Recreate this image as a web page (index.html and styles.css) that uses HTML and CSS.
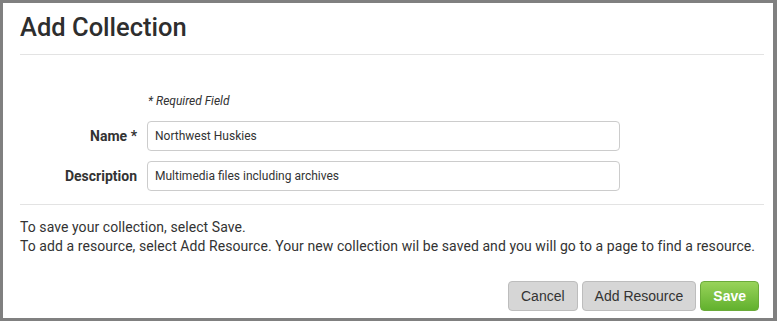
FILE: index.html
```html
<!DOCTYPE html>
<html lang="en">
<head>
    <meta charset="UTF-8">
    <title>Add Collection</title>
    <link rel="stylesheet" href="styles.css">
</head>
<body>
    <div class="dialog">
        <h1 class="title">Add Collection</h1>
        <hr class="rule">
        <form class="coll-form" action="">
            <p class="req-note">* Required Field</p>
            <!-- 名称 -->
            <div class="form-row">
                <label class="form-label" for="collName">Name *</label>
                <input class="form-input" id="collName" type="text" value="Northwest Huskies">
            </div>
            <!-- 描述 -->
            <div class="form-row">
                <label class="form-label" for="collDesc">Description</label>
                <input class="form-input" id="collDesc" type="text" value="Multimedia files including archives">
            </div>
        </form>
        <hr class="rule">
        <p class="help">To save your collection, select Save.<br>To add a resource, select Add Resource. Your new collection wil be saved and you will go to a page to find a resource.</p>
        <div class="actions">
            <button class="btn" type="button">Cancel</button>
            <button class="btn" type="button">Add Resource</button>
            <button class="btn btn-save" type="submit">Save</button>
        </div>
    </div>
</body>
</html>
```

FILE: styles.css
```css
html, body {
  margin: 0;
  padding: 0;
}
body {
  width: 777px;
  height: 321px;
  background: #808080;
  font-family: Roboto, "Liberation Sans", Arial, sans-serif;
  color: #333;
}
.dialog {
  box-sizing: border-box;
  width: 770px;
  height: 315px;
  margin: 3px 4px 3px 3px;
  background: #fff;
  padding: 8px 9px 0 17px;
}
.title {
  margin: 0;
  font-size: 25.5px;
  font-weight: 500;
  line-height: 32px;
  color: #2e2e2e;
}
.rule {
  margin: 11px 0 0 0;
  border: 0;
  border-top: 1px solid #e3e3e3;
}
.coll-form {
  padding: 38px 0 2px 0;
}
.req-note {
  margin: 0 0 12px 128px;
  font-size: 12px;
  font-style: italic;
  line-height: 16px;
}
.form-row {
  display: flex;
  align-items: center;
  margin-bottom: 10px;
}
.form-row:last-child {
  margin-bottom: 0;
}
.form-label {
  width: 117px;
  text-align: right;
  font-weight: bold;
  font-size: 14px;
  margin-right: 10px;
}
.form-input {
  box-sizing: border-box;
  width: 473px;
  height: 30px;
  border: 1px solid #ccc;
  border-radius: 4px;
  padding: 0 7px;
  font-family: Roboto, "Liberation Sans", Arial, sans-serif;
  font-size: 12px;
  color: #333;
  outline: none;
}
.help {
  margin: 13px 0 0 0;
  font-size: 14px;
  line-height: 19px;
  letter-spacing: 0.07px;
}
.actions {
  display: flex;
  justify-content: flex-end;
  gap: 4px;
  margin: 25px 0 0 0;
  padding-right: 5px;
}
.btn {
  height: 30px;
  padding: 0 12px;
  border: 1px solid #bdbdbd;
  border-radius: 4px;
  background: #d6d6d6;
  font-family: "Liberation Sans", Arial, sans-serif;
  font-size: 14px;
  color: #333;
  cursor: pointer;
}
.btn-save {
  border-color: #6bab3a;
  background: linear-gradient(#98d35a, #62b12e);
  color: #fff;
  font-weight: bold;
}
```
